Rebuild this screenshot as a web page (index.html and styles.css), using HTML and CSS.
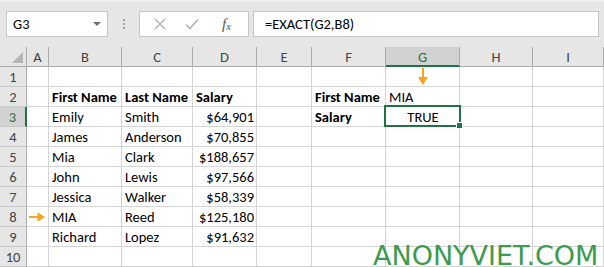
FILE: index.html
```html
<!DOCTYPE html>
<html lang="en">
<head>
    <meta charset="UTF-8">
    <title>EXACT function</title>
    <link rel="stylesheet" href="styles.css">
</head>
<body>
    <div class="toolbar">
        <div class="name-box">
            <span>G3</span>
            <span class="drop"></span>
        </div>
        <div class="grip">
            <span></span><span></span><span></span>
        </div>
        <div class="buttons">
            <svg class="btn-icon" width="12" height="12" viewBox="0 0 12 12">
                <path d="M1 1 L11 11 M11 1 L1 11" stroke="#b3b3b3" stroke-width="1.4" fill="none"/>
            </svg>
            <svg class="btn-icon" width="14" height="12" viewBox="0 0 14 12">
                <path d="M1 6.5 L5 10.5 L13 1.5" stroke="#b3b3b3" stroke-width="1.6" fill="none"/>
            </svg>
            <span class="fx">f<sub>x</sub></span>
        </div>
        <div class="formula">=EXACT(G2,B8)</div>
    </div>

    <div class="sheet">
        <!-- заголовки колонок -->
        <div class="corner"><span class="tri"></span></div>
        <div class="col-head">A</div>
        <div class="col-head">B</div>
        <div class="col-head">C</div>
        <div class="col-head">D</div>
        <div class="col-head">E</div>
        <div class="col-head">F</div>
        <div class="col-head active">G</div>
        <div class="col-head">H</div>
        <div class="col-head">I</div>

        <!-- рядок 1 -->
        <div class="row-head">1</div>
        <div class="cell"></div><div class="cell"></div><div class="cell"></div><div class="cell"></div>
        <div class="cell"></div><div class="cell"></div>
        <div class="cell arrow-down">
            <svg width="10" height="18" viewBox="0 0 10 18">
                <path d="M5 0 V11" stroke="#f7a21b" stroke-width="2"/>
                <path d="M0 9 L5 17 L10 9 Z" fill="#f7a21b"/>
            </svg>
        </div>
        <div class="cell"></div><div class="cell"></div>

        <!-- рядок 2 -->
        <div class="row-head">2</div>
        <div class="cell"></div>
        <div class="cell bold">First Name</div>
        <div class="cell bold">Last Name</div>
        <div class="cell bold">Salary</div>
        <div class="cell"></div>
        <div class="cell bold">First Name</div>
        <div class="cell">MIA</div>
        <div class="cell"></div><div class="cell"></div>

        <!-- рядок 3 -->
        <div class="row-head active">3</div>
        <div class="cell"></div>
        <div class="cell">Emily</div>
        <div class="cell">Smith</div>
        <div class="cell num">$64,901</div>
        <div class="cell"></div>
        <div class="cell bold">Salary</div>
        <div class="cell center selected">TRUE<span class="handle"></span></div>
        <div class="cell"></div><div class="cell"></div>

        <!-- рядок 4 -->
        <div class="row-head">4</div>
        <div class="cell"></div>
        <div class="cell">James</div>
        <div class="cell">Anderson</div>
        <div class="cell num">$70,855</div>
        <div class="cell"></div><div class="cell"></div><div class="cell"></div><div class="cell"></div><div class="cell"></div>

        <!-- рядок 5 -->
        <div class="row-head">5</div>
        <div class="cell"></div>
        <div class="cell">Mia</div>
        <div class="cell">Clark</div>
        <div class="cell num">$188,657</div>
        <div class="cell"></div><div class="cell"></div><div class="cell"></div><div class="cell"></div><div class="cell"></div>

        <!-- рядок 6 -->
        <div class="row-head">6</div>
        <div class="cell"></div>
        <div class="cell">John</div>
        <div class="cell">Lewis</div>
        <div class="cell num">$97,566</div>
        <div class="cell"></div><div class="cell"></div><div class="cell"></div><div class="cell"></div><div class="cell"></div>

        <!-- рядок 7 -->
        <div class="row-head">7</div>
        <div class="cell"></div>
        <div class="cell">Jessica</div>
        <div class="cell">Walker</div>
        <div class="cell num">$58,339</div>
        <div class="cell"></div><div class="cell"></div><div class="cell"></div><div class="cell"></div><div class="cell"></div>

        <!-- рядок 8 -->
        <div class="row-head">8</div>
        <div class="cell arrow-right">
            <svg width="18" height="10" viewBox="0 0 18 10">
                <path d="M0 5 H11" stroke="#f7a21b" stroke-width="2"/>
                <path d="M9 0 L17 5 L9 10 Z" fill="#f7a21b"/>
            </svg>
        </div>
        <div class="cell">MIA</div>
        <div class="cell">Reed</div>
        <div class="cell num">$125,180</div>
        <div class="cell"></div><div class="cell"></div><div class="cell"></div><div class="cell"></div><div class="cell"></div>

        <!-- рядок 9 -->
        <div class="row-head">9</div>
        <div class="cell"></div>
        <div class="cell">Richard</div>
        <div class="cell">Lopez</div>
        <div class="cell num">$91,632</div>
        <div class="cell"></div><div class="cell"></div><div class="cell"></div><div class="cell"></div><div class="cell"></div>

        <!-- рядок 10 -->
        <div class="row-head">10</div>
        <div class="cell"></div><div class="cell"></div><div class="cell"></div><div class="cell"></div>
        <div class="cell"></div><div class="cell"></div><div class="cell"></div><div class="cell"></div><div class="cell"></div>
    </div>

    <div class="watermark">ANONYVIET.COM</div>
</body>
</html>
```

FILE: styles.css
```css
body {
    margin: 0;
    width: 604px;
    height: 267px;
    overflow: hidden;
    position: relative;
    background-color: #e6e6e6;
    font-family: Carlito, Lato, "Liberation Sans", sans-serif;
    font-size: 14.5px;
    color: #000;
}
.toolbar {
    height: 47px;
    box-sizing: border-box;
    padding: 11px 5px 0 6px;
    display: flex;
    align-items: flex-start;
    border-top: 2px solid #f0f0f0;
}
.toolbar > div {
    height: 26px;
    box-sizing: border-box;
}
.name-box {
    width: 102px;
    margin-top: -2px;
    background-color: #fff;
    border: 1px solid #c6c6c6;
    display: flex;
    align-items: center;
    justify-content: space-between;
    padding: 0 6px 0 6px;
}
.drop {
    width: 0;
    height: 0;
    border-left: 4px solid transparent;
    border-right: 4px solid transparent;
    border-top: 4px solid #6f6f6f;
}
.grip {
    width: 31px;
    margin-top: -2px;
    display: flex;
    flex-direction: column;
    align-items: center;
    justify-content: center;
    gap: 2px;
}
.grip span {
    width: 2px;
    height: 2px;
    background-color: #a0a0a0;
}
.buttons {
    width: 110px;
    margin-top: -2px;
    background-color: #fff;
    border: 1px solid #c6c6c6;
    display: flex;
    align-items: center;
    padding-left: 14px;
    gap: 19px;
}
.fx {
    font-family: "Liberation Serif", serif;
    font-style: italic;
    font-size: 15px;
    color: #555;
    margin-left: 4px;
}
.fx sub {
    font-size: 11px;
    vertical-align: -1px;
}
.formula {
    flex: 1;
    margin-top: -2px;
    margin-left: 4px;
    background-color: #fff;
    border: 1px solid #c6c6c6;
    padding-left: 11px;
    line-height: 24px;
}
.sheet {
    display: grid;
    grid-template-columns: 27px 22px 73px 71px 64px 55px 74px 74px 73px 1fr;
    grid-auto-rows: 20px;
    background-color: #fff;
}
.sheet > div {
    box-sizing: border-box;
    border-right: 1px solid #d4d4d4;
    border-bottom: 1px solid #d4d4d4;
    line-height: 19px;
    white-space: nowrap;
    overflow: visible;
}
.corner {
    background-color: #e6e6e6;
    position: relative;
}
.sheet > .corner, .sheet > .col-head {
    border-right-color: #ababab;
    border-bottom-color: #ababab;
}
.tri {
    position: absolute;
    right: 3px;
    bottom: 3px;
    width: 0;
    height: 0;
    border-left: 11px solid transparent;
    border-bottom: 11px solid #b4b4b4;
}
.col-head {
    background-color: #e6e6e6;
    text-align: center;
    color: #444;
    padding-top: 1px;
}
.col-head.active {
    background-color: #d2d2d2;
    color: #217346;
}
.sheet > .col-head.active {
    border-bottom: 2px solid #217346;
}
.row-head {
    background-color: #e6e6e6;
    text-align: center;
    color: #444;
    padding-top: 1px;
}
.sheet > .row-head {
    border-right-color: #ababab;
    border-bottom-color: #c8c8c8;
}
.row-head.active {
    background-color: #d2d2d2;
    color: #217346;
}
.sheet > .row-head.active {
    border-right: 2px solid #217346;
}
.cell {
    padding: 1px 2px 0 3px;
}
.bold {
    font-weight: bold;
}
.num {
    text-align: right;
}
.center {
    text-align: center;
}
.selected {
    position: relative;
}
.selected::after {
    content: "";
    position: absolute;
    left: -2px;
    top: -2px;
    right: -2px;
    bottom: -1px;
    border: 2px solid #217346;
}
.handle {
    position: absolute;
    right: -4px;
    bottom: -3px;
    width: 5px;
    height: 5px;
    background-color: #217346;
    border: 1px solid #fff;
    z-index: 2;
}
.arrow-down {
    display: flex;
    justify-content: center;
    padding-top: 1px;
}
.arrow-right {
    display: flex;
    align-items: center;
    padding-left: 2px;
}
.watermark {
    position: absolute;
    left: 373px;
    top: 245px;
    font-family: "DejaVu Sans", sans-serif;
    font-size: 27px;
    color: #3e9a4c;
    line-height: 22px;
}
```
